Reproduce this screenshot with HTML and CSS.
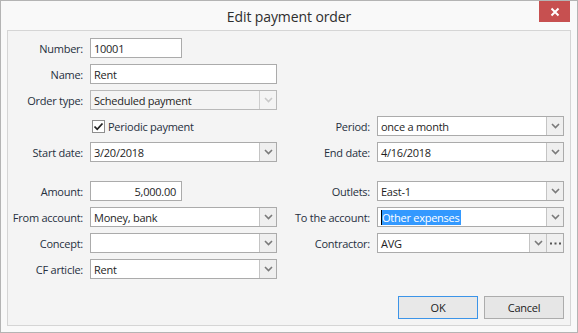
FILE: index.html
```html
<!DOCTYPE html>
<html>
<head>
<meta charset="utf-8">
<link rel="stylesheet" href="styles.css">
</head>
<body>
<div class="window">
  <div class="titlebar">
    <span class="title">Edit payment order</span>
    <div class="close"><svg width="10" height="10" viewBox="0 0 10 10"><path d="M1.5 1.5 L8.5 8.5 M8.5 1.5 L1.5 8.5" stroke="#fff" stroke-width="2" fill="none"/></svg></div>
  </div>
  <div class="panel">
    <div class="form">
      <div class="lbl">Number:</div>
      <div class="edit short"><span class="txt">10001</span></div>
      <div></div><div></div>

      <div class="lbl">Name:</div>
      <div class="edit"><span class="txt">Rent</span></div>
      <div></div><div></div>

      <div class="lbl">Order type:</div>
      <div class="edit combo disabled"><span class="txt">Scheduled payment</span><span class="arrow"><svg width="9" height="6" viewBox="0 0 9 6"><path d="M1 1 L4.5 4.5 L8 1" stroke="currentColor" stroke-width="1.6" fill="none"/></svg></span></div>
      <div></div><div></div>

      <div></div>
      <div class="check"><span class="box"><svg width="11" height="11" viewBox="0 0 11 11"><path d="M1.5 5.5 L4.2 8.3 L9.5 2.5" stroke="#222" stroke-width="1.8" fill="none"/></svg></span><span>Periodic payment</span></div>
      <div class="lbl">Period:</div>
      <div class="edit combo"><span class="txt">once a month</span><span class="arrow"><svg width="9" height="6" viewBox="0 0 9 6"><path d="M1 1 L4.5 4.5 L8 1" stroke="currentColor" stroke-width="1.6" fill="none"/></svg></span></div>

      <div class="lbl">Start date:</div>
      <div class="edit combo"><span class="txt">3/20/2018</span><span class="arrow"><svg width="9" height="6" viewBox="0 0 9 6"><path d="M1 1 L4.5 4.5 L8 1" stroke="currentColor" stroke-width="1.6" fill="none"/></svg></span></div>
      <div class="lbl">End date:</div>
      <div class="edit combo"><span class="txt">4/16/2018</span><span class="arrow"><svg width="9" height="6" viewBox="0 0 9 6"><path d="M1 1 L4.5 4.5 L8 1" stroke="currentColor" stroke-width="1.6" fill="none"/></svg></span></div>

      <div class="spacer"></div>

      <div class="lbl">Amount:</div>
      <div class="edit short right"><span class="txt">5,000.00</span></div>
      <div class="lbl">Outlets:</div>
      <div class="edit combo"><span class="txt">East-1</span><span class="arrow"><svg width="9" height="6" viewBox="0 0 9 6"><path d="M1 1 L4.5 4.5 L8 1" stroke="currentColor" stroke-width="1.6" fill="none"/></svg></span></div>

      <div class="lbl">From account:</div>
      <div class="edit combo"><span class="txt">Money, bank</span><span class="arrow"><svg width="9" height="6" viewBox="0 0 9 6"><path d="M1 1 L4.5 4.5 L8 1" stroke="currentColor" stroke-width="1.6" fill="none"/></svg></span></div>
      <div class="lbl">To the account:</div>
      <div class="edit combo"><span class="txt sel-wrap"><span class="caret"></span><span class="sel">Other expenses</span></span><span class="arrow"><svg width="9" height="6" viewBox="0 0 9 6"><path d="M1 1 L4.5 4.5 L8 1" stroke="currentColor" stroke-width="1.6" fill="none"/></svg></span></div>

      <div class="lbl">Concept:</div>
      <div class="edit combo"><span class="txt"></span><span class="arrow"><svg width="9" height="6" viewBox="0 0 9 6"><path d="M1 1 L4.5 4.5 L8 1" stroke="currentColor" stroke-width="1.6" fill="none"/></svg></span></div>
      <div class="lbl">Contractor:</div>
      <div class="edit combo"><span class="txt">AVG</span><span class="arrow"><svg width="9" height="6" viewBox="0 0 9 6"><path d="M1 1 L4.5 4.5 L8 1" stroke="currentColor" stroke-width="1.6" fill="none"/></svg></span><span class="arrow dots"><svg width="11" height="3" viewBox="0 0 11 3"><rect x="0" y="0.5" width="2" height="2" fill="#555"/><rect x="4.5" y="0.5" width="2" height="2" fill="#555"/><rect x="9" y="0.5" width="2" height="2" fill="#555"/></svg></span></div>

      <div class="lbl">CF article:</div>
      <div class="edit combo"><span class="txt">Rent</span><span class="arrow"><svg width="9" height="6" viewBox="0 0 9 6"><path d="M1 1 L4.5 4.5 L8 1" stroke="currentColor" stroke-width="1.6" fill="none"/></svg></span></div>
      <div></div><div></div>
    </div>
    <div class="buttons">
      <div class="btn default">OK</div>
      <div class="btn">Cancel</div>
    </div>
  </div>
</div>
</body>
</html>
```

FILE: styles.css
```css
html, body {
  margin: 0;
  padding: 0;
}
body {
  width: 578px;
  height: 333px;
  overflow: hidden;
  font-family: "Open Sans", "Noto Sans", sans-serif;
  font-size: 11px;
  letter-spacing: -0.25px;
  color: #1e1e1e;
}
.window {
  box-sizing: border-box;
  width: 578px;
  height: 333px;
  border: 1px solid #b4b4b4;
  background: #f9f9f9;
  display: flex;
  flex-direction: column;
  position: relative;
}
.titlebar {
  height: 29px;
  display: flex;
  align-items: center;
  justify-content: center;
}
.title {
  font-size: 14px;
  letter-spacing: -0.1px;
  color: #2e2e2e;
  margin-top: 1px;
}
.close {
  position: absolute;
  top: 0;
  right: 7px;
  width: 31px;
  height: 21px;
  background: #c75050;
  display: flex;
  align-items: center;
  justify-content: center;
}
.panel {
  box-sizing: border-box;
  margin: 0 6px;
  height: 296px;
  border: 1px solid #d5d5d5;
  background: #f4f4f4;
  display: flex;
  flex-direction: column;
  justify-content: space-between;
  padding: 7px 6px 6px 0;
}
.form {
  display: grid;
  grid-template-columns: 75px 187px 86px 187px;
  grid-template-rows: repeat(5, 20px) 7px repeat(4, 20px);
  column-gap: 7px;
  row-gap: 6px;
}
.spacer {
  grid-column: 1 / -1;
}
.lbl {
  display: flex;
  align-items: center;
  justify-content: flex-end;
  white-space: nowrap;
  color: #26303e;
}
.edit {
  box-sizing: border-box;
  height: 20px;
  border: 1px solid #ababab;
  background: #fff;
  display: flex;
  align-items: stretch;
}
.edit.short {
  width: 92px;
}
.edit.right .txt {
  justify-content: flex-end;
  padding-right: 5px;
}
.txt {
  flex: 1;
  display: flex;
  align-items: center;
  padding-left: 3px;
  white-space: nowrap;
  overflow: hidden;
}
.arrow {
  width: 16px;
  border-left: 1px solid #c4c4c4;
  background: #efefef;
  display: flex;
  align-items: center;
  justify-content: center;
  color: #7a7a7a;
}
.disabled {
  background: #f4f4f4;
  border-color: #b9b9b9;
}
.disabled .arrow {
  color: #c9c9c9;
  background: #f4f4f4;
  border-left-color: #cdcdcd;
}
.dots {
  width: 16px;
}
.sel-wrap {
  padding-left: 3px;
}
.caret {
  width: 1px;
  height: 15px;
  background: #000;
}
.sel {
  background: #3399ff;
  color: #fff;
  line-height: 15px;
  height: 15px;
  padding-right: 1px;
}
.check {
  display: flex;
  align-items: center;
  padding-left: 2px;
  gap: 3px;
  color: #26303e;
}
.box {
  box-sizing: border-box;
  width: 13px;
  height: 13px;
  border: 1px solid #8e8e8e;
  background: #fff;
  display: flex;
  align-items: center;
  justify-content: center;
}
.buttons {
  display: flex;
  justify-content: flex-end;
  gap: 6px;
}
.btn {
  box-sizing: border-box;
  width: 80px;
  height: 23px;
  border: 1px solid #acacac;
  background: #e6e6e6;
  display: flex;
  align-items: center;
  justify-content: center;
  color: #222;
}
.btn.default {
  border-color: #3c94e8;
  background: #e8e8e8;
}
```
